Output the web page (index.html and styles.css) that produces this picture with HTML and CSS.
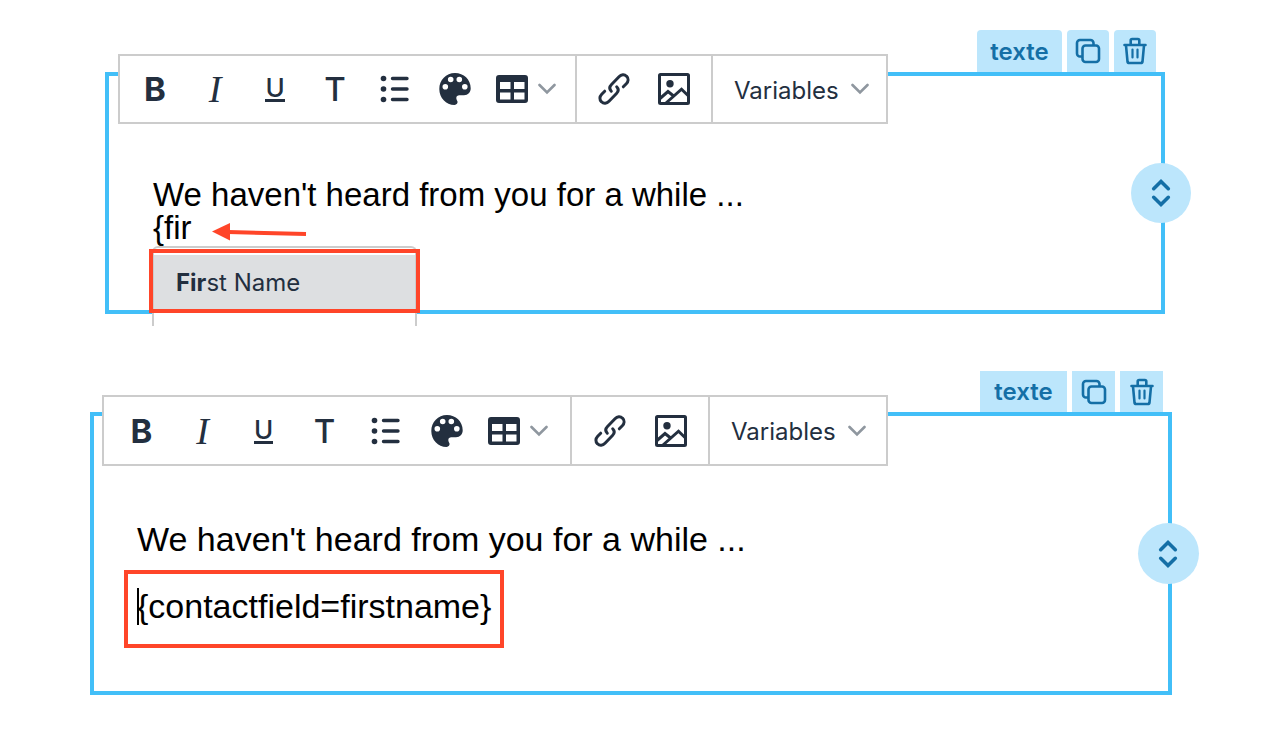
FILE: index.html
```html
<!DOCTYPE html>
<html lang="en">
<head>
    <meta charset="utf-8">
    <title>Text block variables</title>
    <link rel="stylesheet" href="styles.css">
</head>
<body>

<!-- icons shared by both blocks -->
<svg class="sprite" aria-hidden="true">
    <symbol id="list" viewBox="0 0 32 32">
        <g fill="currentColor"><circle cx="4.500" cy="5.500" r="2.800"/><circle cx="4.500" cy="16" r="2.800"/><circle cx="4.500" cy="26.500" r="2.800"/></g>
        <path d="M13.500 5.500H28M13.500 16H28M13.500 26.500H28" fill="none" stroke="currentColor" stroke-width="3.400" stroke-linecap="round"/>
    </symbol>
    <symbol id="palette" viewBox="0 0 32 32">
        <path fill="currentColor" fill-rule="evenodd" d="M16 0C7 0 .3 7.200 .3 16S7 32 15.500 32c2.300 0 3.300-1.700 3-3.400-.3-1.200-1.200-2-1.200-3.600 0-1.800 1.300-2.700 3-2.700h4.700c4 0 6.700-3 6.700-7C31.700 6.500 24.700 0 16 0zM6.300 11a2.800 2.800 0 1 1 0 5.600 2.800 2.800 0 0 1 0-5.600zM11.700 3.700a2.800 2.800 0 1 1 0 5.600 2.800 2.800 0 0 1 0-5.600zM20.300 3.700a2.800 2.800 0 1 1 0 5.600 2.800 2.800 0 0 1 0-5.600zM25.800 11a2.800 2.800 0 1 1 0 5.600 2.800 2.800 0 0 1 0-5.600z"/>
    </symbol>
    <symbol id="table" viewBox="0 0 32 32">
        <path fill="currentColor" fill-rule="evenodd" d="M3 2h26a3 3 0 0 1 3 3v22a3 3 0 0 1-3 3H3a3 3 0 0 1-3-3V5a3 3 0 0 1 3-3zM4 9v7h10.500V9zM18 9v7h10.500V9zM4 19.500v7h10.500v-7zM18 19.500v7h10.500v-7z"/>
    </symbol>
    <symbol id="link" viewBox="0 0 32 32">
        <g fill="none" stroke="currentColor" stroke-width="3" stroke-linecap="round">
            <path d="M13.300 18.200C11.200 16 11.500 13.500 13.500 11.500L21 3.800C23.300 1.400 26.300 1 28.500 3.200C30.800 5.400 30.500 8.500 28.300 10.800L25.300 13.800"/>
            <path d="M18.700 13.800C20.800 16 20.500 18.500 18.500 20.500L11 28.200C8.700 30.600 5.700 31 3.500 28.800C1.200 26.600 1.500 23.500 3.700 21.200L6.700 18.200"/>
        </g>
    </symbol>
    <symbol id="image" viewBox="0 0 32 32">
        <rect x="1.500" y="1.500" width="29" height="29" rx="1" fill="none" stroke="currentColor" stroke-width="3"/>
        <circle cx="12" cy="10.700" r="3.700" fill="currentColor"/>
        <path d="M2 25.500L10 18.500L15 22.500M8 30L23.500 16.200L30 22.500" fill="none" stroke="currentColor" stroke-width="3"/>
    </symbol>
    <symbol id="chevron" viewBox="0 0 18 12">
        <path d="M1.500 2L9 9.500L16.500 2" fill="none" stroke="currentColor" stroke-width="2.600" stroke-linecap="round"/>
    </symbol>
    <symbol id="copy" viewBox="0 0 26 26">
        <g fill="none" stroke="currentColor" stroke-width="2.600">
            <rect x="7.500" y="7.500" width="16.500" height="16.500" rx="3"/>
            <path d="M7.500 18.500H5a3 3 0 0 1-3-3V5a3 3 0 0 1 3-3h10.500a3 3 0 0 1 3 3v2.500"/>
        </g>
    </symbol>
    <symbol id="trash" viewBox="0 0 26 28">
        <g fill="none" stroke="currentColor" stroke-width="2.600" stroke-linecap="round" stroke-linejoin="round">
            <path d="M2.500 8H23.500M4 8.500L5.500 24.500Q5.700 26 7.200 26H18.800Q20.300 26 20.500 24.500L22 8.500M8.700 7.500V3.500Q8.700 2 10.200 2H15.800Q17.300 2 17.300 3.500V7.500"/>
            <path d="M10.500 12.500V20.500M15.500 12.500V20.500" stroke-width="2.200"/>
        </g>
    </symbol>
    <symbol id="move" viewBox="0 0 20 30">
        <path d="M2.700 10.700L10 3.500L17.300 10.700M2.700 19.300L10 26.500L17.300 19.300" fill="none" stroke="currentColor" stroke-width="3.600" stroke-linecap="round"/>
    </symbol>
</svg>

<main>
    <section class="block block-search">
        <div class="tabs">
            <button class="tab tab-name">texte</button>
            <button class="tab" aria-label="Duplicate"><svg class="icon-copy"><use href="#copy"/></svg></button>
            <button class="tab" aria-label="Delete"><svg class="icon-trash"><use href="#trash"/></svg></button>
        </div>
        <div class="frame">
            <div class="toolbar">
                <div class="group group-text">
                    <button class="tool bold">B</button>
                    <button class="tool italic">I</button>
                    <button class="tool underline"><span>U</span></button>
                    <button class="tool title">T</button>
                    <button class="tool" aria-label="List"><svg class="icon"><use href="#list"/></svg></button>
                    <button class="tool" aria-label="Color"><svg class="icon"><use href="#palette"/></svg></button>
                    <button class="tool tool-table" aria-label="Table"><svg class="icon"><use href="#table"/></svg><svg class="chevron"><use href="#chevron"/></svg></button>
                </div>
                <div class="group group-insert">
                    <button class="tool" aria-label="Link"><svg class="icon"><use href="#link"/></svg></button>
                    <button class="tool" aria-label="Image"><svg class="icon"><use href="#image"/></svg></button>
                </div>
                <label class="group variables">
                    <select aria-label="Variables"><option>Variables</option></select>
                    <svg class="chevron"><use href="#chevron"/></svg>
                </label>
            </div>
            <p>We haven't heard from you for a while ...</p>
            <div class="typed">
                <p>{fir</p>
                <svg class="arrow" viewBox="0 0 96 20"><path d="M16 10L94 12" stroke="#ff4529" stroke-width="4"/><path d="M0 9.500L18 1V18.500z" fill="#ff4529"/></svg>
                <div class="menu">
                    <button class="menu-item"><b>Fir</b>st Name</button>
                </div>
                <div class="menu-highlight"></div>
            </div>
            <button class="move" aria-label="Move"><svg class="icon-move"><use href="#move"/></svg></button>
        </div>
    </section>

    <section class="block block-result">
        <div class="tabs">
            <button class="tab tab-name">texte</button>
            <button class="tab" aria-label="Duplicate"><svg class="icon-copy"><use href="#copy"/></svg></button>
            <button class="tab" aria-label="Delete"><svg class="icon-trash"><use href="#trash"/></svg></button>
        </div>
        <div class="frame">
            <div class="toolbar">
                <div class="group group-text">
                    <button class="tool bold">B</button>
                    <button class="tool italic">I</button>
                    <button class="tool underline"><span>U</span></button>
                    <button class="tool title">T</button>
                    <button class="tool" aria-label="List"><svg class="icon"><use href="#list"/></svg></button>
                    <button class="tool" aria-label="Color"><svg class="icon"><use href="#palette"/></svg></button>
                    <button class="tool tool-table" aria-label="Table"><svg class="icon"><use href="#table"/></svg><svg class="chevron"><use href="#chevron"/></svg></button>
                </div>
                <div class="group group-insert">
                    <button class="tool" aria-label="Link"><svg class="icon"><use href="#link"/></svg></button>
                    <button class="tool" aria-label="Image"><svg class="icon"><use href="#image"/></svg></button>
                </div>
                <label class="group variables">
                    <select aria-label="Variables"><option>Variables</option></select>
                    <svg class="chevron"><use href="#chevron"/></svg>
                </label>
            </div>
            <p>We haven't heard from you for a while ...</p>
            <p class="inserted">{contactfield=firstname}</p>
            <button class="move" aria-label="Move"><svg class="icon-move"><use href="#move"/></svg></button>
        </div>
    </section>
</main>

</body>
</html>
```
FILE: styles.css
```css
* {
    box-sizing: border-box;
}

body {
    margin: 0;
    background: #fff;
    color: #000;
    font-family: "Liberation Sans", Arial, sans-serif;
}

main {
    padding-top: 30px;
}

p {
    margin: 0;
}

svg {
    display: block;
    flex: none;
}

button, select {
    margin: 0;
    padding: 0;
    border: 0;
    background: none;
    color: #232f3f;
    font-family: Inter, sans-serif;
    font-size: 24px;
}

.sprite {
    position: absolute;
    width: 0;
    height: 0;
}

.block-search {
    --tool: 60px;
    --bar: 70px;
    --tab: 42px;
    --move: 60px;
    margin: 0 113px 57px 105px;
    font-size: 33px;
    line-height: 33px;
}

.block-result {
    --tool: 61px;
    --bar: 71px;
    --tab: 43px;
    --move: 61px;
    margin: 0 106px 0 90px;
    font-size: 34px;
    line-height: 34px;
}

/* tabs above the frame */
.tabs {
    display: flex;
    justify-content: flex-end;
    gap: 5px;
    padding-right: 9px;
}

.tab {
    display: flex;
    align-items: center;
    justify-content: center;
    width: var(--tab);
    height: 42px;
    border-radius: 4px 4px 0 0;
    background: #bce6fc;
    color: #146fa6;
}

.block-result .tab {
    height: 41px;
    border-radius: 0;
}

.tab-name {
    width: calc(var(--tab) * 2 + 1px);
    font-weight: 600;
}

.icon-copy {
    width: 26px;
    height: 26px;
}

.icon-trash {
    width: 26px;
    height: 28px;
}

.frame {
    position: relative;
    border: 4px solid #42bff8;
    padding: 102px 44px 66px;
}

.block-result .frame {
    padding: 106px 43px 43px;
}

/* toolbar, sits over the top border of the frame */
.toolbar {
    position: absolute;
    top: -22px;
    left: 9px;
    display: flex;
    height: var(--bar);
    border: 2px solid #ccc;
    background: #fff;
}

.block-result .toolbar {
    top: -21px;
    left: 8px;
}

.group {
    display: flex;
    align-items: center;
    padding: 0 7px;
}

.group + .group {
    border-left: 2px solid #ccc;
}

.group-text {
    padding: 0 0 0 5px;
}

.block-result .group-text {
    padding-left: 7px;
}

.tool {
    display: flex;
    align-items: center;
    justify-content: center;
    width: var(--tool);
    height: 60px;
    font-size: 33px;
    font-weight: 500;
}

.bold {
    font-weight: 700;
}

.italic {
    font-family: "Liberation Serif", serif;
    font-size: 38px;
    font-style: italic;
    font-weight: 400;
}

.underline span {
    border-bottom: 3px solid #232f3f;
    font-size: 26px;
    line-height: 23px;
}

.tool-table {
    justify-content: flex-start;
    width: 90px;
    padding-left: 11px;
    gap: 10px;
}

.block-result .tool-table {
    width: 93px;
}

.icon {
    width: 32px;
    height: 32px;
}

.chevron {
    width: 18px;
    height: 12px;
    color: #8f979f;
}

.variables {
    gap: 12px;
    padding: 0 17px 0 21px;
}

.block-result .variables {
    padding-right: 20px;
}

select {
    appearance: none;
    padding-top: 2px;
}

/* autocomplete */
.typed {
    position: relative;
    display: flex;
    align-items: center;
    gap: 20px;
}

.arrow {
    width: 96px;
    height: 20px;
    margin-top: 8px;
}

.menu {
    position: absolute;
    top: 35px;
    left: -1px;
    width: 265px;
    height: 80px;
    padding-top: 7px;
    border: 2px solid #ccc;
    border-bottom: 0;
    border-radius: 6px 6px 0 0;
    background: #fff;
}

.menu-item {
    width: 100%;
    height: 55px;
    padding-left: 22px;
    background: #dddfe1;
    text-align: left;
}

.menu-highlight {
    position: absolute;
    top: 38px;
    left: -4px;
    width: 271px;
    height: 64px;
    border: 4px solid #ff4529;
}

.inserted {
    position: relative;
    width: fit-content;
    margin: 14px 0 0 -13px;
    padding: 15px 9px 21px;
    border: 4px solid #ff4529;
}

/* text cursor */
.inserted::before {
    content: "";
    position: absolute;
    top: 14px;
    left: 9px;
    width: 2px;
    height: 37px;
    background: #000;
}

.move {
    position: absolute;
    top: 50%;
    right: calc(var(--move) / -2);
    display: flex;
    align-items: center;
    justify-content: center;
    width: var(--move);
    height: var(--move);
    margin-top: calc(var(--move) / -2);
    border-radius: 50%;
    background: #bce6fc;
    color: #146fa6;
}

.icon-move {
    width: 20px;
    height: 30px;
}
```
